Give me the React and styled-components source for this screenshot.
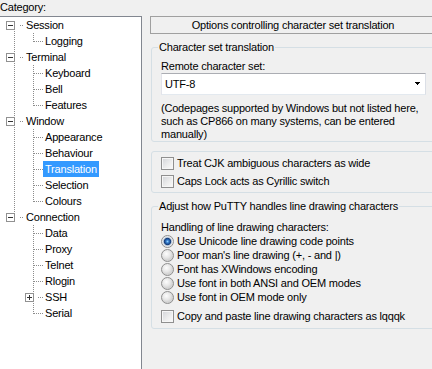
// PuTTY configuration page: category tree on the left, translation options on the right.

import React from "react";
import styled, { createGlobalStyle } from "styled-components";

// ==== GLOBAL ====
const GlobalStyle = createGlobalStyle`
  html, body {
    margin: 0;
    padding: 0;
    background: #f0f0f0;
    overflow: hidden;
  }
  body {
    font-family: "Liberation Sans", Arial, sans-serif;
    font-size: 11px;
    letter-spacing: -0.2px;
    color: #000;
  }
`;

// ==== LAYOUT ====
const Window = styled.div`
  display: flex;
  width: 432px;
  height: 369px;
  overflow: hidden;
`;

const LeftColumn = styled.div`
  flex: none;
  width: 143px;
  margin-left: -1px;
  display: flex;
  flex-direction: column;
`;

const Caption = styled.div`
  height: 13px;
  line-height: 13px;
  padding: 1px 0 0 1px;
  margin-bottom: 2px;
`;

// ==== TREE ====
const TreeBox = styled.div`
  flex: none;
  height: 370px;
  background: #fff;
  border: 1px solid #828790;
`;

const TreeRow = styled.div`
  display: flex;
  align-items: center;
  height: 16px;
`;

const NodeLabel = styled.span`
  height: 16px;
  line-height: 16px;
  padding: 0 2px;
  white-space: nowrap;
  background: ${(p) => (p.$selected ? "#3399ff" : "transparent")};
  color: ${(p) => (p.$selected ? "#fff" : "#000")};
`;

const Lines = styled.svg`
  display: block;
  flex: none;
`;

const dotted = {
  stroke: "#8c8c8c",
  strokeWidth: 1,
  strokeDasharray: "1 1",
  fill: "none",
  shapeRendering: "crispEdges",
};

function Expander({ x, kind }) {
  return (
    <g shapeRendering="crispEdges">
      <rect x={x - 3.5} y={4.5} width={8} height={8} fill="#fff" stroke="#919191" />
      <path d={`M${x - 2} 8.5h5`} stroke="#333" />
      {kind === "plus" && <path d={`M${x + 0.5} 6v5`} stroke="#333" />}
    </g>
  );
}

function RootLines({ above, below }) {
  return (
    <Lines width="24" height="16">
      {above && <path d="M14.5 0V4" style={dotted} />}
      {below && <path d="M14.5 14V16" style={dotted} />}
      <path d="M20 8.5H24" style={dotted} />
      <Expander x={10} kind="minus" />
    </Lines>
  );
}

function ChildLines({ trunk, last, box }) {
  return (
    <Lines width="43" height="16">
      {trunk && <path d="M14.5 0V16" style={dotted} />}
      {box ? (
        <>
          <path d="M33.5 0V4" style={dotted} />
          {!last && <path d="M33.5 14V16" style={dotted} />}
          <path d="M38 8.5H43" style={dotted} />
          <Expander x={29} kind={box} />
        </>
      ) : (
        <>
          <path d={`M33.5 0V${last ? 9 : 16}`} style={dotted} />
          <path d="M34 8.5H43" style={dotted} />
        </>
      )}
    </Lines>
  );
}

const tree = [
  { label: "Session", children: ["Logging"] },
  { label: "Terminal", children: ["Keyboard", "Bell", "Features"] },
  { label: "Window", children: ["Appearance", "Behaviour", "Translation", "Selection", "Colours"] },
  { label: "Connection", children: ["Data", "Proxy", "Telnet", "Rlogin", { label: "SSH", closed: true }, "Serial"] },
];

function buildRows() {
  const rows = [];
  tree.forEach((node, i) => {
    const lastRoot = i === tree.length - 1;
    rows.push({ label: node.label, root: true, above: i > 0, below: !lastRoot });
    node.children.forEach((child, j) => {
      const c = typeof child === "string" ? { label: child } : child;
      rows.push({
        label: c.label,
        root: false,
        trunk: !lastRoot,
        last: j === node.children.length - 1,
        box: c.closed ? "plus" : null,
      });
    });
  });
  return rows;
}

// ==== RIGHT PANEL ====
const RightPanel = styled.div`
  flex: none;
  width: 286px;
  margin-left: 8px;
  padding-top: 16px;
  display: flex;
  flex-direction: column;
`;

const Header = styled.div`
  height: 16px;
  line-height: 16px;
  border: 1px solid #a0a0a0;
  text-align: center;
  white-space: nowrap;
`;

const Group = styled.fieldset`
  margin: ${(p) => p.$top}px 0 0 1px;
  padding: ${(p) => p.$padTop}px 0 ${(p) => p.$padBottom}px 9px;
  border: 1px solid #d5dfe5;
  border-radius: 3px;
  min-width: 0;
`;

const Legend = styled.legend`
  padding: 0 1px;
  margin-left: -3px;
  line-height: 13px;
  white-space: nowrap;
`;

const Text = styled.div`
  line-height: 13px;
  white-space: nowrap;
  margin-top: ${(p) => p.$top || 0}px;
`;

const Select = styled.div`
  box-sizing: border-box;
  width: 265px;
  height: 22px;
  display: flex;
  align-items: center;
  justify-content: space-between;
  padding: 0 5px 1px 3px;
  background: #fff;
  border: 1px solid;
  border-color: #abadb3 #dbdfe6 #e3e9ef #e2e3ea;
`;

const Option = styled.label`
  display: flex;
  align-items: center;
  gap: 3px;
  height: ${(p) => p.$h}px;
  margin-top: ${(p) => p.$top || 0}px;
  line-height: 13px;
  white-space: nowrap;
`;

const CheckBox = styled.span`
  flex: none;
  box-sizing: border-box;
  width: 13px;
  height: 13px;
  border: 1px solid #8f8f8f;
  background: linear-gradient(135deg, #d2d4d8 0%, #eeeeee 60%, #fbfbfb 100%);
  box-shadow: inset 0 0 0 1px #f6f6f6;
`;

const Radio = styled.span`
  flex: none;
  box-sizing: border-box;
  width: 13px;
  height: 13px;
  border-radius: 50%;
  border: 1px solid #8f8f8f;
  background: ${(p) =>
    p.$checked
      ? "radial-gradient(circle at 50% 50%, #8fd0ff 0px, #2e74c4 1.6px, #173f7c 3.2px, #c9d3df 4.2px, #f4f4f4 5.5px)"
      : "radial-gradient(circle at 40% 35%, #fdfdfd 0px, #e6e6e6 4px, #d4d4d4 6px)"};
`;

const radios = [
  "Use Unicode line drawing code points",
  "Poor man's line drawing (+, - and |)",
  "Font has XWindows encoding",
  "Use font in both ANSI and OEM modes",
  "Use font in OEM mode only",
];

// ==== APP ====
function App() {
  const rows = buildRows();
  return (
    <>
      <GlobalStyle />
      <Window>
        <LeftColumn>
          <Caption>Category:</Caption>
          <TreeBox>
            {rows.map((r) => (
              <TreeRow key={r.label}>
                {r.root ? (
                  <RootLines above={r.above} below={r.below} />
                ) : (
                  <ChildLines trunk={r.trunk} last={r.last} box={r.box} />
                )}
                <NodeLabel $selected={r.label === "Translation"}>{r.label}</NodeLabel>
              </TreeRow>
            ))}
          </TreeBox>
        </LeftColumn>

        <RightPanel>
          <Header>Options controlling character set translation</Header>

          <Group $top={7} $padTop={6} $padBottom={0}>
            <Legend>Character set translation</Legend>
            <Text>Remote character set:</Text>
            <Select>
              <span>UTF-8</span>
              <svg width="5" height="3" shapeRendering="crispEdges">
                <path d="M0 0h5v1H0zM1 1h3v1H1zM2 2h1v1H2z" fill="#000" />
              </svg>
            </Select>
            <Text $top={7}>
              (Codepages supported by Windows but not listed here,
              <br />
              such as CP866 on many systems, can be entered
              <br />
              manually)
            </Text>
          </Group>

          <Group $top={9} $padTop={2} $padBottom={2}>
            <Option $h={18}>
              <CheckBox />
              Treat CJK ambiguous characters as wide
            </Option>
            <Option $h={18}>
              <CheckBox />
              Caps Lock acts as Cyrillic switch
            </Option>
          </Group>

          <Group $top={7} $padTop={8} $padBottom={3}>
            <Legend>Adjust how PuTTY handles line drawing characters</Legend>
            <Text>Handling of line drawing characters:</Text>
            {radios.map((label, i) => (
              <Option key={label} $h={14}>
                <Radio $checked={i === 0} />
                {label}
              </Option>
            ))}
            <Option $h={18} $top={3}>
              <CheckBox />
              Copy and paste line drawing characters as lqqqk
            </Option>
          </Group>
        </RightPanel>
      </Window>
    </>
  );
}

export default App;
